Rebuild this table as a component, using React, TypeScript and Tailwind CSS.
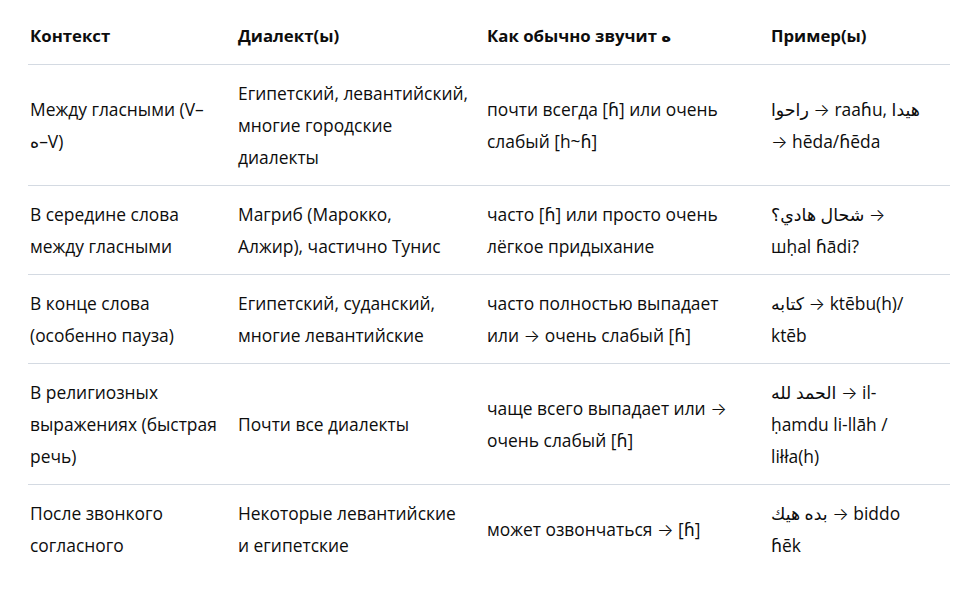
import React from 'react';

type Row = {
  context: string[];
  dialects: string[];
  sound: string[];
  examples: string[];
};

const rows: Row[] = [
  {
    context: ['Между гласными (V–', 'ه–V)'],
    dialects: ['Египетский, левантийский,', 'многие городские', 'диалекты'],
    sound: ['почти всегда [ɦ] или очень', 'слабый [h~ɦ]'],
    examples: ['راحوا → raaɦu, هيدا', '→ hēda/ɦēda'],
  },
  {
    context: ['В середине слова', 'между гласными'],
    dialects: ['Магриб (Марокко,', 'Алжир), частично Тунис'],
    sound: ['часто [ɦ] или просто очень', 'лёгкое придыхание'],
    examples: ['شحال هادي؟ →', 'шḥal ɦādi?'],
  },
  {
    context: ['В конце слова', '(особенно пауза)'],
    dialects: ['Египетский, суданский,', 'многие левантийские'],
    sound: ['часто полностью выпадает', 'или → очень слабый [ɦ]'],
    examples: ['كتابه → ktēbu(h)/', 'ktēb'],
  },
  {
    context: ['В религиозных', 'выражениях (быстрая', 'речь)'],
    dialects: ['Почти все диалекты'],
    sound: ['чаще всего выпадает или →', 'очень слабый [ɦ]'],
    examples: ['الحمد لله → il-', 'ḥamdu li-llāh /', 'liłła(h)'],
  },
  {
    context: ['После звонкого', 'согласного'],
    dialects: ['Некоторые левантийские', 'и египетские'],
    sound: ['может озвончаться → [ɦ]'],
    examples: ['بده هيك → biddo', 'ɦēk'],
  },
];

// arrow glyph from Inter, closer to the reference than the fallback one
function withArrows(line: string) {
  const parts = line.split('→');
  return parts.map((part, i) => (
    <React.Fragment key={i}>
      {part}
      {i < parts.length - 1 && (
        <span className="font-light leading-none" style={{ fontFamily: 'Inter, sans-serif' }}>
          →
        </span>
      )}
    </React.Fragment>
  ));
}

function Lines({ lines }: { lines: string[] }) {
  return (
    <>
      {lines.map((line, i) => (
        <span key={i} className="block whitespace-nowrap h-8">
          {withArrows(line)}
        </span>
      ))}
    </>
  );
}

const cell = 'py-3 pl-[2px] pr-2 align-middle';

export default function App() {
  return (
    <div
      className="w-[980px] h-[594px] bg-white pt-2 pl-[28px] text-[#0d0d0d]"
      style={{ fontFamily: '"Open Sans", "DejaVu Sans", sans-serif' }}
    >
      <table className="table-fixed border-collapse w-[922px] text-[17.4px] leading-[32px]">
        <colgroup>
          <col className="w-[208px]" />
          <col className="w-[249px]" />
          <col className="w-[284px]" />
          <col className="w-[181px]" />
        </colgroup>
        <thead>
          <tr className="border-b border-[#d4dae2] text-[16.8px]">
            <th className={`text-left font-bold ${cell}`}>Контекст</th>
            <th className={`text-left font-bold ${cell}`}>Диалект(ы)</th>
            <th className={`text-left font-bold ${cell}`}>Как обычно звучит ه</th>
            <th className={`text-left font-bold ${cell}`}>Пример(ы)</th>
          </tr>
        </thead>
        <tbody>
          {rows.map((row, idx) => (
            <tr
              key={idx}
              className={idx < rows.length - 1 ? 'border-b border-[#d4dae2]' : ''}
            >
              <td className={cell}>
                <Lines lines={row.context} />
              </td>
              <td className={cell}>
                <Lines lines={row.dialects} />
              </td>
              <td className={cell}>
                <Lines lines={row.sound} />
              </td>
              <td className={cell}>
                <Lines lines={row.examples} />
              </td>
            </tr>
          ))}
        </tbody>
      </table>
    </div>
  );
}
